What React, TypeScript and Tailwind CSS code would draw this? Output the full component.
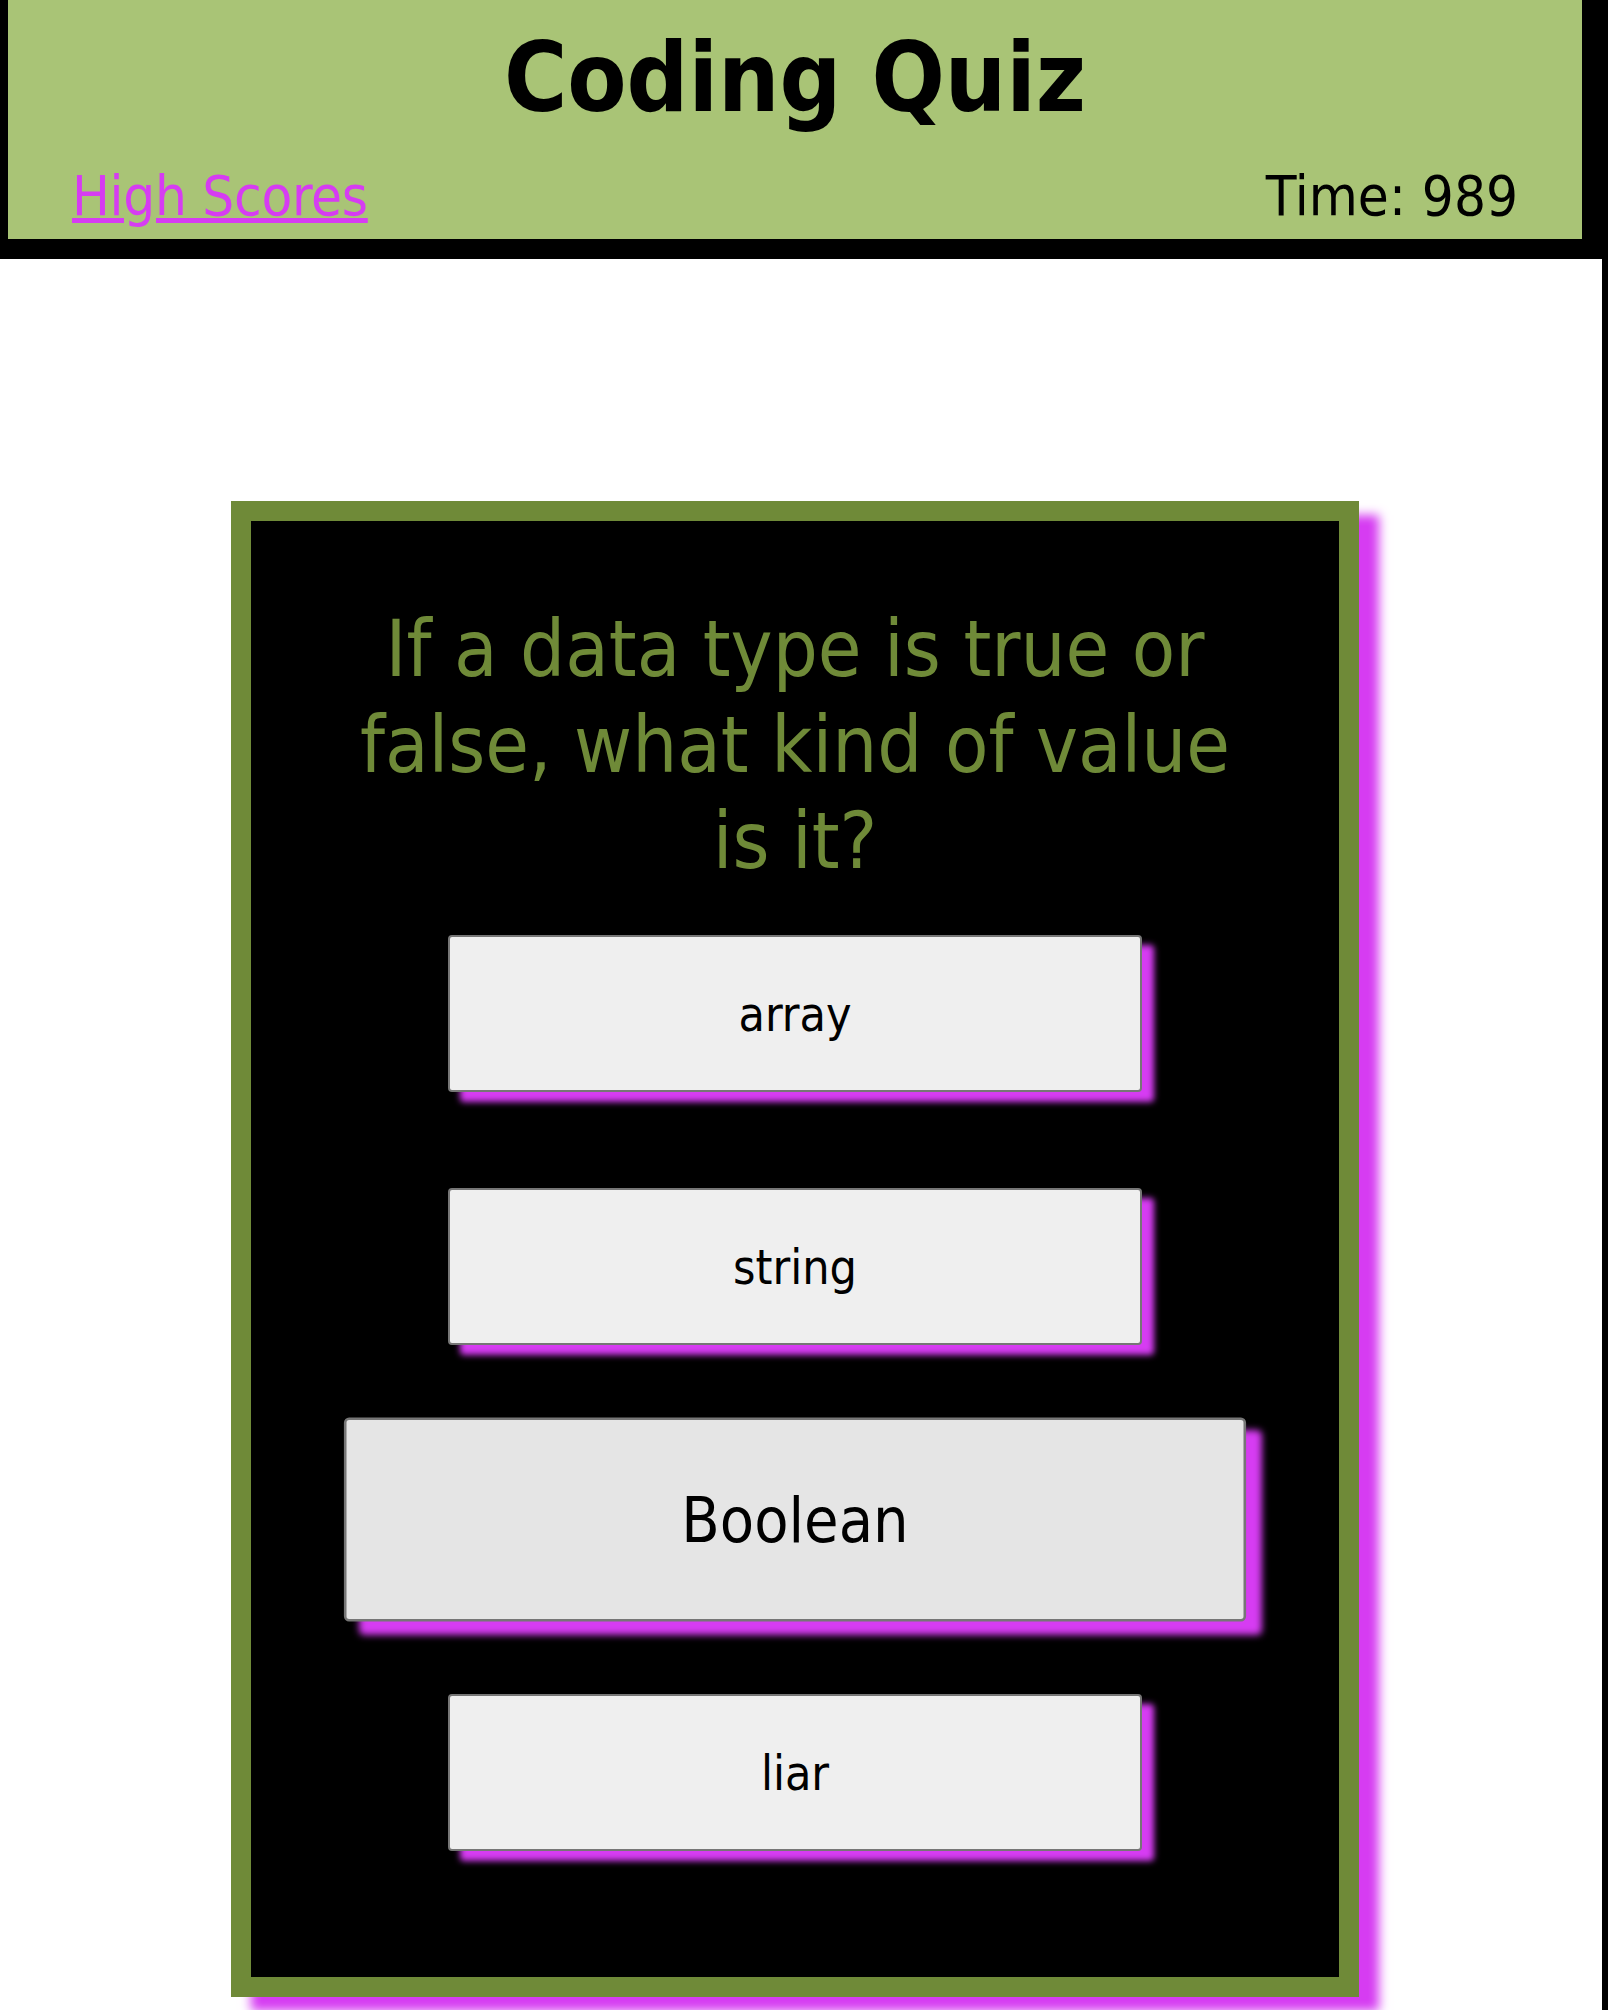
import { useState } from "react";

const answers = ["array", "string", "Boolean", "liar"];

const font = "font-['DejaVu_Sans_Condensed','DejaVu_Sans',sans-serif] [font-stretch:condensed]";

export default function App() {
  const [hovered, setHovered] = useState<string | null>("Boolean");

  return (
    <div className={`min-h-[2010px] bg-white border-r-[6px] border-black ${font}`}>
      <header className="bg-[#a9c476] border-l-[8px] border-r-[20px] border-b-[20px] border-black h-[259px] flex flex-col">
        <h1 className="text-center text-[96px] leading-[116px] font-bold text-black pt-[20px]">
          Coding Quiz
        </h1>
        <div className="flex justify-between items-end px-[64px] mt-auto pb-[10px] text-[56px] leading-[66px]">
          <a href="#" className="text-[#d63cf2] underline tracking-[-0.3px]">
            High Scores
          </a>
          <span className="text-black">Time: 989</span>
        </div>
      </header>

      <main className="pl-[8px] pr-[20px] pt-[242px]">
        <section className="mx-auto w-[1128px] border-[20px] border-[#6f8a38] bg-black shadow-[20px_14px_10px_#d63cf2] pt-[80px] pb-[78px]">
          <h2 className="mx-auto max-w-[900px] text-center text-[79px] leading-[96px] text-[#6f8a38]">
            If a data type is true or false, what kind of value is it?
          </h2>
          <div className="flex flex-col items-center gap-[96px] mt-[46px] mb-[48px]">
            {answers.map((a) => (
              <button
                key={a}
                onMouseEnter={() => setHovered(a)}
                className={`w-[694px] h-[157px] text-[48px] text-black border-2 border-[#767676] rounded-[4px] shadow-[12px_10px_6px_#d63cf2] ${
                  hovered === a ? "bg-[#e5e5e5] scale-[1.3]" : "bg-[#efefef]"
                }`}
              >
                {a}
              </button>
            ))}
          </div>
        </section>
      </main>
    </div>
  );
}
